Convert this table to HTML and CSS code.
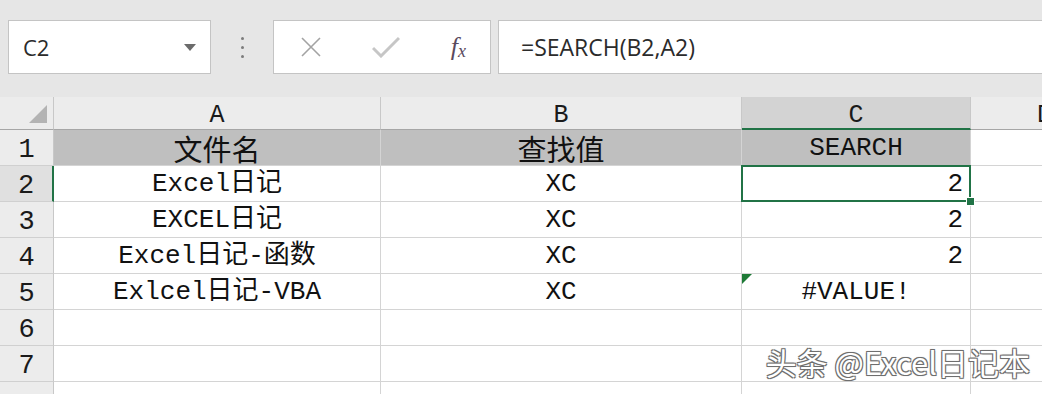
FILE: index.html
```html
<!DOCTYPE html>
<html lang="zh">
<head>
<meta charset="utf-8">
<title>SEARCH</title>
<link rel="stylesheet" href="styles.css">
</head>
<body>
<div class="app">
  <div class="toolbar">
    <div class="namebox">
      <span class="ref">C2</span>
      <svg class="drop" width="12" height="7" viewBox="0 0 12 7"><path d="M0 0 L12 0 L6 7 Z" fill="#6b6b6b"/></svg>
    </div>
    <div class="sep"><i></i><i></i><i></i></div>
    <div class="fnbox">
      <svg class="ico" width="22" height="20" viewBox="0 0 22 20"><path d="M2 1 L20 19 M20 1 L2 19" stroke="#a3a3a3" stroke-width="1.6" fill="none"/></svg>
      <svg class="ico" width="28" height="22" viewBox="0 0 28 22"><path d="M1 12 L9 20 L27 2" stroke="#c6c6c6" stroke-width="3" fill="none"/></svg>
      <span class="fx">f<sub>x</sub></span>
    </div>
    <div class="formula">=SEARCH(B2,A2)</div>
  </div>

  <div class="sheet">
    <div class="corner"><span class="tri"></span></div>
    <div class="ch">A</div>
    <div class="ch">B</div>
    <div class="ch sel">C</div>
    <div class="ch d">D</div>

    <div class="rh">1</div>
    <div class="c head">文件名</div>
    <div class="c head">查找值</div>
    <div class="c head mono">SEARCH</div>
    <div class="c"></div>

    <div class="rh sel">2</div>
    <div class="c">Excel日记</div>
    <div class="c">XC</div>
    <div class="c num active">2</div>
    <div class="c"></div>

    <div class="rh">3</div>
    <div class="c">EXCEL日记</div>
    <div class="c">XC</div>
    <div class="c num">2</div>
    <div class="c"></div>

    <div class="rh">4</div>
    <div class="c">Excel日记-函数</div>
    <div class="c">XC</div>
    <div class="c num">2</div>
    <div class="c"></div>

    <div class="rh">5</div>
    <div class="c">Exlcel日记-VBA</div>
    <div class="c">XC</div>
    <div class="c err">#VALUE!</div>
    <div class="c"></div>

    <div class="rh">6</div>
    <div class="c"></div>
    <div class="c"></div>
    <div class="c"></div>
    <div class="c"></div>

    <div class="rh">7</div>
    <div class="c"></div>
    <div class="c"></div>
    <div class="c"></div>
    <div class="c"></div>

    <div class="rh"></div>
    <div class="c"></div>
    <div class="c"></div>
    <div class="c"></div>
    <div class="c"></div>
  </div>

  <div class="watermark">头条 @Excel日记本</div>
</div>
</body>
</html>
```

FILE: styles.css
```css
html, body {
  margin: 0;
  padding: 0;
  background: #ffffff;
}

.app {
  position: relative;
  width: 1042px;
  height: 394px;
  overflow: hidden;
  background: #ffffff;
}

/* ---------- toolbar ---------- */
.toolbar {
  box-sizing: border-box;
  height: 97px;
  padding: 20px 0 23px 8px;
  display: flex;
  background: #e6e6e6;
  font-family: "Open Sans", "Noto Sans", sans-serif;
  color: #2b2b2b;
}

.namebox {
  box-sizing: border-box;
  width: 203px;
  display: flex;
  align-items: center;
  justify-content: space-between;
  padding: 0 14px 0 14px;
  background: #ffffff;
  border: 1px solid #c4c4c4;
}

.ref {
  font-size: 22px;
  line-height: 1;
}

.drop {
  display: block;
}

.sep {
  width: 62px;
  display: flex;
  flex-direction: column;
  align-items: center;
  justify-content: center;
  gap: 6px;
}

.sep i {
  display: block;
  width: 3px;
  height: 3px;
  border-radius: 50%;
  background: #7c7c7c;
}

.fnbox {
  box-sizing: border-box;
  width: 218px;
  display: flex;
  align-items: center;
  padding: 0 24px 0 26px;
  justify-content: space-between;
  background: #ffffff;
  border: 1px solid #c4c4c4;
}

.ico {
  display: block;
}

.fx {
  font-family: "Liberation Serif", serif;
  font-style: italic;
  font-size: 26px;
  color: #5a4a5e;
  line-height: 1;
}

.fx sub {
  font-size: 18px;
  vertical-align: -2px;
}

.formula {
  box-sizing: border-box;
  flex: 1;
  margin-left: 7px;
  display: flex;
  align-items: center;
  padding-left: 22px;
  background: #ffffff;
  border: 1px solid #c4c4c4;
  border-right: none;
  font-size: 23px;
  color: #2b2b2b;
}

/* ---------- sheet ---------- */
.sheet {
  display: grid;
  grid-template-columns: 54px 327px 361px 229px 148px;
  grid-template-rows: 33px repeat(8, 36px);
  font-family: "Liberation Mono", "Noto Sans CJK SC", monospace;
  color: #111111;
}

.corner,
.ch,
.rh,
.c {
  box-sizing: border-box;
  display: flex;
  white-space: nowrap;
}

.corner {
  background: #ececec;
  border-right: 1px solid #c8c8c8;
  border-bottom: 1px solid #a6a6a6;
  align-items: flex-end;
  justify-content: flex-end;
  padding: 0 6px 6px 0;
}

.tri {
  width: 0;
  height: 0;
  border-left: 18px solid transparent;
  border-bottom: 18px solid #b3b3b3;
}

.ch {
  background: #ececec;
  border-right: 1px solid #c8c8c8;
  border-bottom: 1px solid #a6a6a6;
  align-items: flex-end;
  justify-content: center;
  font-size: 25px;
  line-height: 26px;
  color: #1a1a1a;
}

.ch.sel {
  background: #d3d3d3;
  border-bottom: 2px solid #217346;
  line-height: 25px;
}

.ch.d {
  justify-content: flex-start;
  padding-left: 66px;
  overflow: hidden;
}

.rh {
  background: #ececec;
  border-right: 1px solid #c8c8c8;
  border-bottom: 1px solid #d0d0d0;
  align-items: flex-end;
  justify-content: center;
  font-size: 27px;
  line-height: 30px;
  color: #1a1a1a;
}

.rh.sel {
  background: #e0e0e0;
  border-right: 2px solid #217346;
}

.c {
  position: relative;
  background: #ffffff;
  border-right: 1px solid #d4d4d4;
  border-bottom: 1px solid #d4d4d4;
  align-items: flex-end;
  justify-content: center;
  font-size: 26px;
  line-height: 31px;
  padding-bottom: 1px;
}

.c.head {
  background: #bfbfbf;
  font-family: "Noto Sans CJK SC", sans-serif;
  font-size: 29px;
  line-height: 33px;
  padding-bottom: 0;
}

.c.head.mono {
  font-family: "Liberation Mono", monospace;
  font-size: 26px;
  line-height: 31px;
  padding-bottom: 1px;
}

.c.num {
  justify-content: flex-end;
  padding-right: 7px;
}

.c.err::before {
  content: "";
  position: absolute;
  top: 0;
  left: 0;
  width: 0;
  height: 0;
  border-top: 10px solid #1e7a36;
  border-right: 10px solid transparent;
}

.c.active {
  z-index: 2;
}

.c.active::after {
  content: "";
  position: absolute;
  top: -1px;
  left: -1px;
  right: -1px;
  bottom: -1px;
  border: 2px solid #217346;
}

.c.active::before {
  content: "";
  position: absolute;
  right: -5px;
  bottom: -5px;
  width: 7px;
  height: 7px;
  background: #217346;
  border: 1px solid #ffffff;
  z-index: 3;
}

/* ---------- watermark ---------- */
.watermark {
  position: absolute;
  right: 12px;
  bottom: 14px;
  font-family: "Noto Sans CJK SC", "Noto Sans", sans-serif;
  font-size: 31px;
  line-height: 36px;
  color: #ffffff;
  text-shadow:
    -1px -1px 0 #6e6e6e,
    1px -1px 0 #6e6e6e,
    -1px 1px 0 #6e6e6e,
    1px 1px 0 #6e6e6e,
    0 0 2px #555555;
}
```
